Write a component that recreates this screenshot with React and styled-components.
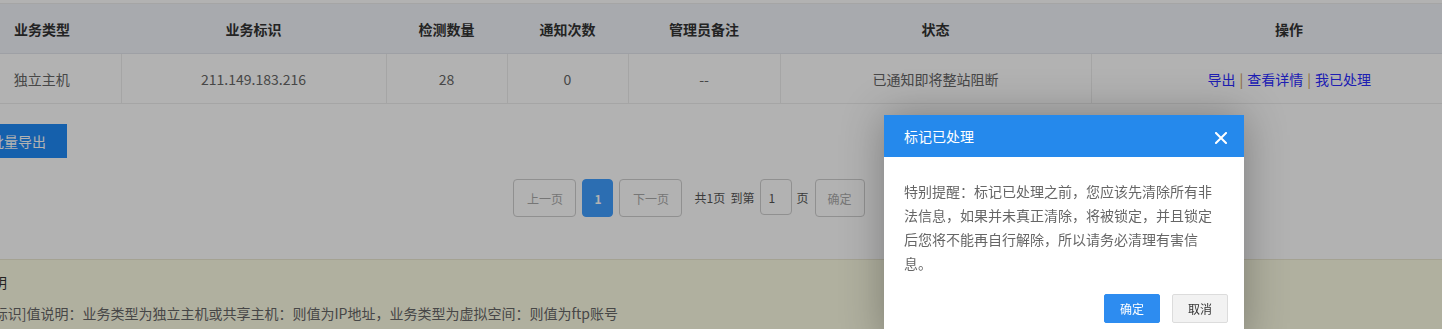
import React, {useState} from "react";
import styled, {createGlobalStyle} from "styled-components";

const GlobalStyle = createGlobalStyle`
    html, body {
        margin: 0;
        padding: 0;
        overflow: hidden;
        background: #fff;
        font-family: "Noto Sans CJK SC", "Noto Sans", sans-serif;
    }
`;

const Page = styled.div`
    width: 1518px;
    margin-left: -31px;
    padding-top: 3px;
`;

const Table = styled.table`
    width: 1518px;
    border-collapse: collapse;
    table-layout: fixed;
    border-top: 1px solid #ececec;
    font-size: 14px;
`;

const HeadCell = styled.th`
    height: 49px;
    padding: ${props => props.$first ? '0 6px 0 0' : '0'};
    background: #f1f4f9;
    border-bottom: 1px solid #e3e6ec;
    color: #333;
    font-weight: bold;
    text-align: center;
`;

const Cell = styled.td`
    height: 49px;
    padding: ${props => props.$first ? '0 6px 0 0' : '0'};
    border-bottom: 1px solid #ececec;
    border-left: ${props => props.$first ? 'none' : '1px solid #ececec'};
    color: #666;
    text-align: center;
`;

const Link = styled.a`
    color: #2b2bff;
    text-decoration: none;
    cursor: pointer;
`;

const Sep = styled.span`
    color: #c9984b;
    margin: 0 4px;
`;

const BatchButton = styled.button`
    display: block;
    margin-top: 20px;
    height: 34px;
    padding: 0 21px;
    border: none;
    background: #1f8af7;
    color: #fff;
    font-family: inherit;
    font-size: 14px;
    cursor: pointer;
`;

const Pager = styled.div`
    width: 1446px;
    display: flex;
    justify-content: center;
    align-items: flex-start;
    margin-top: 21px;
    font-size: 12px;
`;

const PageButton = styled.button`
    width: ${props => props.$width}px;
    height: 38px;
    padding: 0;
    margin-right: ${props => props.$gap || 6}px;
    border: 1px solid ${props => props.$active ? '#409eff' : '#cfcfcf'};
    border-radius: 4px;
    background: ${props => props.$active ? '#409eff' : '#fff'};
    color: ${props => props.$active ? '#fff' : '#aaa'};
    font-family: inherit;
    font-size: 12px;
    font-weight: ${props => props.$active ? 'bold' : 'normal'};
    box-sizing: border-box;
`;

const PagerText = styled.span`
    line-height: 38px;
    color: #555;
    margin-right: ${props => props.$gap || 5}px;
    white-space: pre;
`;

const PageInput = styled.input`
    width: 32px;
    height: 36px;
    box-sizing: border-box;
    margin-right: 5px;
    padding: 0 8px;
    border: 1px solid #cfcfcf;
    border-radius: 4px;
    color: #555;
    font-family: inherit;
    font-size: 12px;
    outline: none;
`;

const Notes = styled.div`
    margin-top: 42px;
    padding: 12px 20px 20px 10px;
    background: #fdfce4;
    border-top: 1px solid #ebe9d2;
    font-size: 14px;
    line-height: 20px;
`;

const NotesTitle = styled.div`
    color: #333;
    margin-bottom: 11px;
`;

const NotesLine = styled.div`
    padding-left: 10px;
    color: #666;
`;

const Overlay = styled.div`
    position: fixed;
    inset: 0;
    background: rgba(0, 0, 0, 0.3);
`;

const Modal = styled.div`
    position: fixed;
    left: 884px;
    top: 115px;
    width: 360px;
    background: #fff;
    box-shadow: 0 0 40px rgba(0, 0, 0, 0.3);
`;

const ModalHeader = styled.div`
    height: 42px;
    display: flex;
    align-items: center;
    justify-content: space-between;
    padding: 0 17px 0 20px;
    background: #2589ec;
    color: #fff;
    font-size: 14px;
`;

const CloseButton = styled.button`
    display: flex;
    padding: 0;
    margin-top: 3px;
    border: none;
    background: transparent;
    cursor: pointer;
`;

const ModalBody = styled.div`
    padding: 22px 20px 0;
    color: #666;
    font-size: 14px;
    line-height: 24px;
`;

const ModalFooter = styled.div`
    display: flex;
    justify-content: flex-end;
    gap: 12px;
    padding: 19px 16px 20px;
`;

const ModalButton = styled.button`
    width: 56px;
    height: 29px;
    padding: 0;
    border: 1px solid ${props => props.$primary ? '#2d8cf0' : '#dcdcdc'};
    border-radius: 2px;
    background: ${props => props.$primary ? '#2d8cf0' : '#f2f2f2'};
    color: ${props => props.$primary ? '#fff' : '#333'};
    font-family: inherit;
    font-size: 12px;
    cursor: pointer;
`;

const columns = [
    {title: '业务类型', width: 152},
    {title: '业务标识', width: 265},
    {title: '检测数量', width: 121},
    {title: '通知次数', width: 121},
    {title: '管理员备注', width: 152},
    {title: '状态', width: 311},
    {title: '操作', width: 396},
];

const CloseIcon = () => (
    <svg width="12" height="12" viewBox="0 0 12 12">
        <path d="M1 1 L11 11 M11 1 L1 11" stroke="#fff" strokeWidth="2" strokeLinecap="square"/>
    </svg>
);

const App = () => {
    const [open, setOpen] = useState(true);
    const [page, setPage] = useState('1');

    return (
        <>
            <GlobalStyle/>
            <Page>
                <Table>
                    <colgroup>
                        {columns.map(c => <col key={c.title} style={{width: c.width}}/>)}
                    </colgroup>
                    <thead>
                    <tr>
                        {columns.map((c, i) => <HeadCell key={c.title} $first={i === 0}>{c.title}</HeadCell>)}
                    </tr>
                    </thead>
                    <tbody>
                    <tr>
                        <Cell $first>独立主机</Cell>
                        <Cell>211.149.183.216</Cell>
                        <Cell>28</Cell>
                        <Cell>0</Cell>
                        <Cell>--</Cell>
                        <Cell>已通知即将整站阻断</Cell>
                        <Cell>
                            <Link>导出</Link><Sep>|</Sep><Link>查看详情</Link><Sep>|</Sep><Link
                            onClick={() => setOpen(true)}>我已处理</Link>
                        </Cell>
                    </tr>
                    </tbody>
                </Table>

                <BatchButton>批量导出</BatchButton>

                <Pager>
                    <PageButton $width={63}>上一页</PageButton>
                    <PageButton $width={31} $active>1</PageButton>
                    <PageButton $width={63} $gap={12}>下一页</PageButton>
                    <PagerText>共1页  到第</PagerText>
                    <PageInput value={page} onChange={e => setPage(e.target.value)}/>
                    <PagerText $gap={6}>页</PagerText>
                    <PageButton $width={50}>确定</PageButton>
                </Pager>

                <Notes>
                    <NotesTitle>说明</NotesTitle>
                    <NotesLine>[标识]值说明：业务类型为独立主机或共享主机：则值为IP地址，业务类型为虚拟空间：则值为ftp账号</NotesLine>
                </Notes>
            </Page>

            {open && <>
                <Overlay/>
                <Modal>
                    <ModalHeader>
                        标记已处理
                        <CloseButton onClick={() => setOpen(false)}><CloseIcon/></CloseButton>
                    </ModalHeader>
                    <ModalBody>
                        特别提醒：标记已处理之前，您应该先清除所有非法信息，如果并未真正清除，将被锁定，并且锁定后您将不能再自行解除，所以请务必清理有害信息。
                    </ModalBody>
                    <ModalFooter>
                        <ModalButton $primary onClick={() => setOpen(false)}>确定</ModalButton>
                        <ModalButton onClick={() => setOpen(false)}>取消</ModalButton>
                    </ModalFooter>
                </Modal>
            </>}
        </>
    );
};

export default App;
